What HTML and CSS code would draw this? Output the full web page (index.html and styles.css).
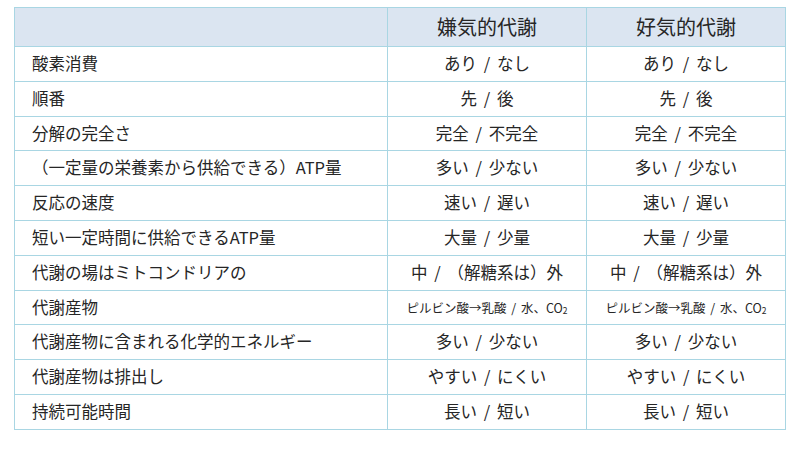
FILE: index.html
```html
<!DOCTYPE html>
<html lang="ja">
<head>
<meta charset="utf-8">
<link rel="stylesheet" href="styles.css">
</head>
<body>
<div class="wrap">
<table class="cmp">
<colgroup><col class="c1"><col class="c2"><col class="c3"></colgroup>
<thead>
<tr><th></th><th>嫌気的代謝</th><th>好気的代謝</th></tr>
</thead>
<tbody>
<tr><td>酸素消費</td><td>あり / なし</td><td>あり / なし</td></tr>
<tr><td>順番</td><td>先 / 後</td><td>先 / 後</td></tr>
<tr><td>分解の完全さ</td><td>完全 / 不完全</td><td>完全 / 不完全</td></tr>
<tr><td>（一定量の栄養素から供給できる）ATP量</td><td>多い / 少ない</td><td>多い / 少ない</td></tr>
<tr><td>反応の速度</td><td>速い / 遅い</td><td>速い / 遅い</td></tr>
<tr><td>短い一定時間に供給できるATP量</td><td>大量 / 少量</td><td>大量 / 少量</td></tr>
<tr><td>代謝の場はミトコンドリアの</td><td>中 / （解糖系は）外</td><td>中 / （解糖系は）外</td></tr>
<tr><td>代謝産物</td><td class="small">ピルビン酸→乳酸 / 水、CO<sub>2</sub></td><td class="small">ピルビン酸→乳酸 / 水、CO<sub>2</sub></td></tr>
<tr><td>代謝産物に含まれる化学的エネルギー</td><td>多い / 少ない</td><td>多い / 少ない</td></tr>
<tr><td>代謝産物は排出し</td><td>やすい / にくい</td><td>やすい / にくい</td></tr>
<tr><td>持続可能時間</td><td>長い / 短い</td><td>長い / 短い</td></tr>
</tbody>
</table>
</div>
</body>
</html>
```

FILE: styles.css
```css
html, body {
  margin: 0;
  padding: 0;
  background: #ffffff;
}
.wrap {
  padding: 7px 0 0 14px;
}
.cmp {
  border-collapse: collapse;
  table-layout: fixed;
  width: 771px;
  font-family: "Noto Sans CJK JP", "Noto Sans", sans-serif;
  color: #262626;
}
.c1 { width: 373px; }
.c2 { width: 199px; }
.c3 { width: 199px; }
.cmp th, .cmp td {
  border: 1px solid #a9d6e3;
  padding: 0;
  vertical-align: middle;
  line-height: 1.2;
}
.cmp th {
  background: #dbe5f1;
  height: 38px;
  font-size: 20px;
  font-weight: normal;
  text-align: center;
}
.cmp td {
  height: 33.8px;
  font-size: 16.5px;
  text-align: center;
  word-spacing: 3px;
}
.cmp td:first-child {
  text-align: left;
  padding-left: 17px;
  word-spacing: 0;
}
.cmp td.small {
  font-size: 12.5px;
  word-spacing: 2px;
}
.cmp sub {
  font-size: 8.5px;
  vertical-align: -1px;
  line-height: 0;
}
```
